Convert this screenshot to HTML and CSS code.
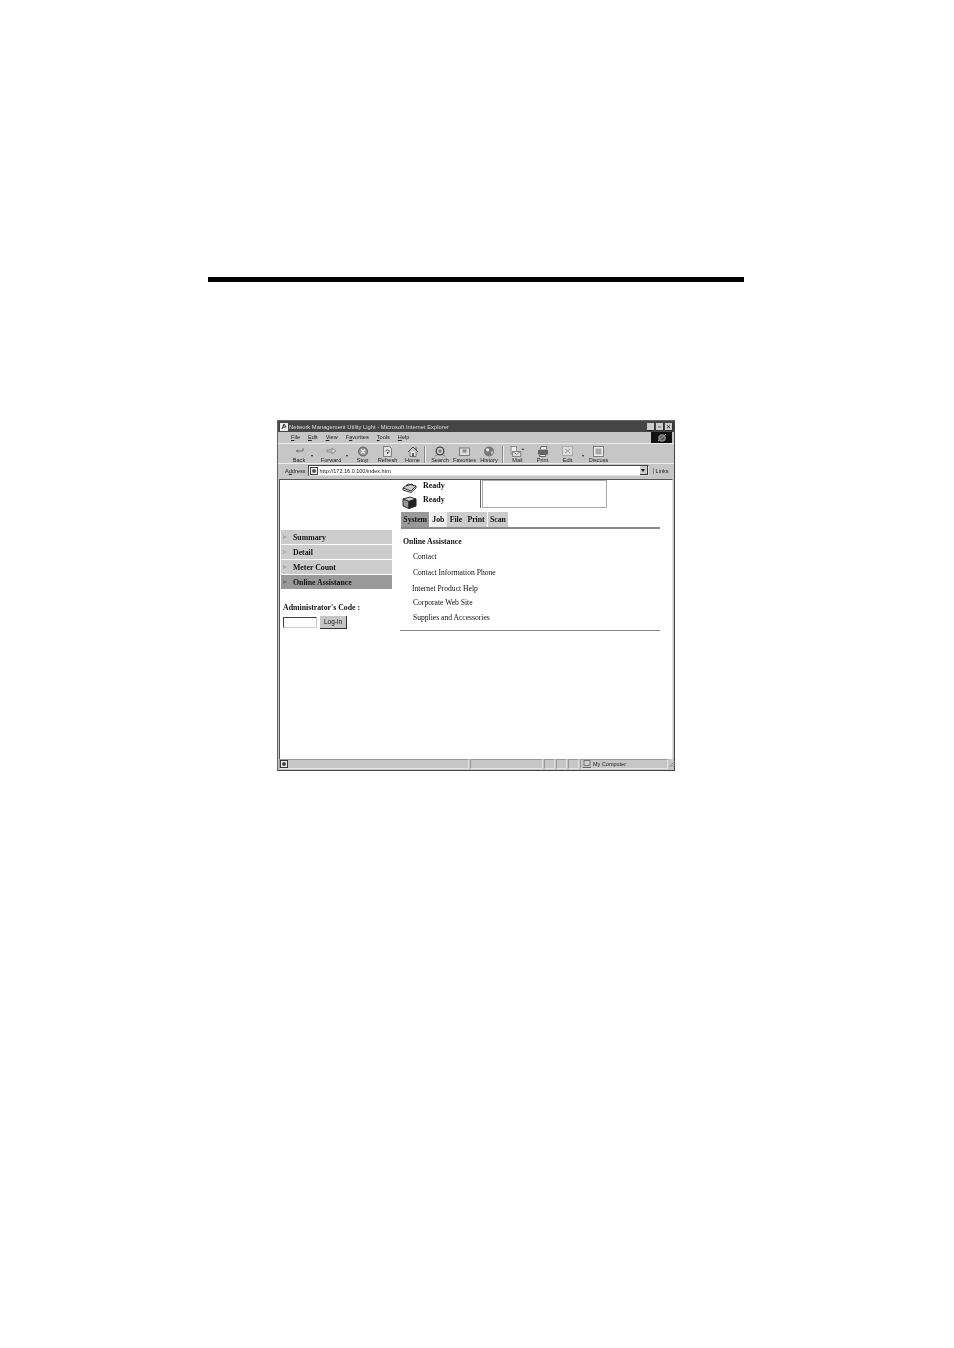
FILE: index.html
```html
<!DOCTYPE html>
<html lang="en">
<head>
  <meta charset="UTF-8" />
  <title>Network Management Utility Light</title>
  <link rel="stylesheet" href="styles.css">
</head>
<body>
  <div class="rule"></div>

  <div class="window">
    <div class="titlebar">
      <svg class="title-icon" width="8" height="8" viewBox="0 0 8 8"><rect width="8" height="8" fill="#eee"/><path d="M2 6 L4 1 L6 4 L3 4" fill="none" stroke="#333" stroke-width="1"/></svg>
      <span class="title-text">Network Management Utility Light - Microsoft Internet Explorer</span>
      <span class="winbtns">
        <span class="winbtn">_</span><span class="winbtn">▫</span><span class="winbtn">×</span>
      </span>
    </div>

    <div class="menubar">
      <div class="menus">
        <span><u>F</u>ile</span><span><u>E</u>dit</span><span><u>V</u>iew</span><span>F<u>a</u>vorites</span><span><u>T</u>ools</span><span><u>H</u>elp</span>
      </div>
      <div class="throbber">
        <svg width="10" height="10" viewBox="0 0 10 10"><circle cx="5" cy="5" r="3" fill="#555" stroke="#888" stroke-width="1.6"/><path d="M1 8 C3 6 7 3 9 1" stroke="#999" stroke-width="1" fill="none"/></svg>
      </div>
    </div>

    <div class="toolbar">
      <div class="tool tool-back">
        <svg width="9" height="10" viewBox="0 0 9 10"><path d="M8 2 V5 H1.5 M3 3.5 L1.5 5 L3 6.5" fill="none" stroke="#555" stroke-width=".8"/></svg>
        <span>Back</span>
      </div>
      <i class="drop"></i>
      <div class="tool tool-forward">
        <svg width="11" height="10" viewBox="0 0 11 10"><path d="M1 4 H6 V2 L10 5 L6 8 V6 H1 Z" fill="#ccc" stroke="#777" stroke-width=".7"/></svg>
        <span>Forward</span>
      </div>
      <i class="drop"></i>
      <div class="tool tool-stop">
        <svg width="10" height="11" viewBox="0 0 10 11"><circle cx="5" cy="5.5" r="4.5" fill="#999" stroke="#444" stroke-width=".8"/><path d="M3 3.5 L7 7.5 M7 3.5 L3 7.5" stroke="#eee" stroke-width="1.1"/></svg>
        <span>Stop</span>
      </div>
      <div class="tool tool-refresh">
        <svg width="9" height="11" viewBox="0 0 9 11"><path d="M.5 .5 H6.5 L8.5 2.5 V10.5 H.5 Z" fill="#e4e4e4" stroke="#666" stroke-width=".8"/><path d="M3 5.5 A1.6 1.6 0 1 1 4.5 7 M4.5 8 L4.5 6" fill="none" stroke="#444" stroke-width=".8"/></svg>
        <span>Refresh</span>
      </div>
      <div class="tool tool-home">
        <svg width="12" height="11" viewBox="0 0 12 11"><path d="M1 6 L6 1 L11 6 M9 1.5 V4" fill="none" stroke="#444" stroke-width="1"/><path d="M3 5.5 V10.5 H9 V5.5" fill="#eee" stroke="#555" stroke-width=".8"/><rect x="5" y="7" width="2" height="3.5" fill="#555"/></svg>
        <span>Home</span>
      </div>
      <b class="sep"></b>
      <div class="tool tool-search">
        <svg width="12" height="11" viewBox="0 0 12 11"><circle cx="6" cy="5" r="3.8" fill="#ccc" stroke="#444" stroke-width="1.3"/><circle cx="6" cy="5" r="1.5" fill="#777"/><path d="M3 8.5 L1 10.5 M9 8.5 L11 10.5" stroke="#444" stroke-width=".8"/></svg>
        <span>Search</span>
      </div>
      <div class="tool tool-favorites">
        <svg width="11" height="10" viewBox="0 0 11 10"><rect x=".5" y="2" width="10" height="7.5" fill="#ddd" stroke="#666" stroke-width=".8"/><rect x="3.5" y="3.5" width="4" height="3" fill="#888"/></svg>
        <span>Favorites</span>
      </div>
      <div class="tool tool-history">
        <svg width="12" height="11" viewBox="0 0 12 11"><circle cx="6" cy="5.5" r="5" fill="#777"/><path d="M3 3 C5 1 7 3 6 5 C4 6 3 5 3 3 M8 6 L10 5 L9 9 Z" fill="#eee"/></svg>
        <span>History</span>
      </div>
      <b class="sep"></b>
      <div class="tool tool-mail">
        <svg width="15" height="12" viewBox="0 0 15 12"><rect x=".5" y=".5" width="6" height="8" fill="#eee" stroke="#777" stroke-width=".8"/><path d="M2 11.5 H11 V6 H2 Z M2 6 L6.5 9 L11 6" fill="#ddd" stroke="#666" stroke-width=".8"/><path d="M12 3 H15 L13.5 4.5 Z" fill="#222"/></svg>
        <span>Mail</span>
      </div>
      <div class="tool tool-print">
        <svg width="12" height="11" viewBox="0 0 12 11"><path d="M4 .5 H10 L9 4 H3 Z" fill="#eee" stroke="#555" stroke-width=".8"/><rect x="1" y="4" width="10" height="4.5" fill="#666"/><path d="M3 8.5 H9 L8.5 10.5 H2.5 Z" fill="#eee" stroke="#444" stroke-width=".8"/></svg>
        <span>Print</span>
      </div>
      <div class="tool tool-edit">
        <svg width="11" height="10" viewBox="0 0 11 10"><rect x=".5" y=".5" width="10" height="9" fill="#ddd" stroke="#aaa"/><path d="M3 3 L8 7 M8 3 L3 7" stroke="#999"/></svg>
        <span>Edit</span>
      </div>
      <i class="drop"></i>
      <div class="tool tool-discuss">
        <svg width="11" height="11" viewBox="0 0 11 11"><rect x=".5" y=".5" width="10" height="10" fill="#eee" stroke="#666" stroke-width=".8"/><rect x="2.5" y="2.5" width="6" height="6" fill="#aaa"/></svg>
        <span>Discuss</span>
      </div>
    </div>

    <div class="addressbar">
      <span class="address-label">A<u>d</u>dress</span>
      <div class="address-field">
        <svg width="8" height="8" viewBox="0 0 8 8"><rect x=".5" y=".5" width="7" height="7" fill="#eee" stroke="#444"/><circle cx="4" cy="4" r="2" fill="#555"/></svg>
        <span>http://172.16.0.100/index.htm</span>
        <i class="combo"></i>
      </div>
      <span class="links">Links</span>
    </div>

    <div class="viewport">
      <div class="leftcol">
        <ul class="nav">
          <li><i></i>Summary</li>
          <li><i></i>Detail</li>
          <li><i></i>Meter Count</li>
          <li class="active"><i></i>Online Assistance</li>
        </ul>
        <div class="admin-label">Administrator's Code :</div>
        <div class="login">
          <div class="code-input"></div>
          <div class="login-btn">Log-in</div>
        </div>
      </div>

      <div class="rightcol">
        <div class="status-area">
          <div class="devices">
            <div class="device">
              <svg width="15" height="11" viewBox="0 0 15 11"><path d="M1 6 L6 2 L14 4 L9 9 Z" fill="#ccc" stroke="#333"/><path d="M4 4 L10 2 L12 4 M1 6 V8 L9 10.5 L14 6 V4" fill="none" stroke="#333"/></svg>
              <span>Ready</span>
            </div>
            <div class="device">
              <svg width="15" height="13" viewBox="0 0 15 13"><path d="M1 3 L8 1 L14 3 L7 5.5 Z" fill="#ccc" stroke="#333"/><path d="M1 3 V10 L7 12.5 V5.5 Z" fill="#999" stroke="#333"/><path d="M7 5.5 L14 3 V10 L7 12.5 Z" fill="#222" stroke="#222"/></svg>
              <span>Ready</span>
            </div>
          </div>
          <div class="divider"></div>
          <div class="message-box"></div>
        </div>

        <div class="tabs">
          <div class="tab tab-on">System</div>
          <div class="tab tab-light">Job</div>
          <div class="tab">File</div>
          <div class="tab">Print</div>
          <div class="tab">Scan</div>
        </div>

        <div class="panel">
          <h4>Online Assistance</h4>
          <a class="help-link">Contact</a>
          <a class="help-link wide">Contact Information Phone</a>
          <a class="help-link wide shifted">Internet Product Help</a>
          <a class="help-link narrow">Corporate Web Site</a>
          <a class="help-link">Supplies and Accessories</a>
        </div>
      </div>
    </div>

    <div class="statusbar">
      <div class="st st-main">
        <svg width="8" height="8" viewBox="0 0 8 8"><rect x=".5" y=".5" width="7" height="7" fill="#eee" stroke="#333"/><circle cx="4" cy="4" r="2" fill="#444"/></svg>
      </div>
      <div class="st st-progress"></div>
      <div class="st st-small"></div>
      <div class="st st-small"></div>
      <div class="st st-small"></div>
      <div class="st st-zone">
        <svg width="8" height="8" viewBox="0 0 8 8"><rect x="1" y=".5" width="6" height="5" fill="#ccc" stroke="#666" stroke-width=".8"/><path d="M0 7.5 H8" stroke="#666"/></svg>
        <span>My Computer</span>
      </div>
      <svg class="grip" width="6" height="8" viewBox="0 0 6 8"><path d="M0 8 L6 2 M2 8 L6 4 M4 8 L6 6" stroke="#888" stroke-width=".7"/></svg>
    </div>
  </div>
</body>
</html>
```

FILE: styles.css
```css
html, body {
  margin: 0;
  background: #fff;
}

body {
  height: 1348px;
  overflow: hidden;
  padding-top: 277px;
  box-sizing: border-box;
}

.rule {
  width: 536px;
  height: 5px;
  margin-left: 208px;
  background: #000;
}

.window {
  width: 398px;
  height: 351px;
  margin: 138px 0 0 277px;
  box-sizing: border-box;
  border: 1px solid #666;
  border-right-color: #444;
  border-bottom-color: #444;
  background: #c6c6c6;
  display: flex;
  flex-direction: column;
  font-family: "Liberation Sans", Arial, sans-serif;
  font-size: 5.6px;
  color: #222;
  filter: blur(0.35px);
}

.titlebar {
  height: 11px;
  background: #454545;
  color: #ddd;
  display: flex;
  align-items: center;
  padding: 0 1px 0 2px;
  gap: 1px;
  font-size: 5.8px;
}

.title-text {
  flex: 1;
}

.winbtns {
  display: flex;
  gap: 0;
}

.winbtn {
  width: 8px;
  height: 8px;
  background: #ccc;
  color: #111;
  border-right: 1px solid #333;
  border-bottom: 1px solid #333;
  box-sizing: border-box;
  font-size: 7px;
  line-height: 7px;
  text-align: center;
  margin-left: 1px;
}

.menubar {
  height: 12px;
  display: flex;
  align-items: center;
  justify-content: space-between;
  padding-left: 13px;
  border-bottom: 1px solid #eee;
  box-sizing: border-box;
}

.menus {
  display: flex;
  gap: 8px;
  margin-top: -2px;
}

.throbber {
  width: 21px;
  height: 11px;
  background: #111;
  margin-right: 2px;
  display: flex;
  align-items: center;
  justify-content: center;
}

.toolbar {
  height: 20px;
  display: flex;
  align-items: flex-start;
  padding: 2px 0 0 11px;
  box-sizing: border-box;
  border-bottom: 1px solid #eee;
}

.tool {
  height: 18px;
  display: flex;
  flex-direction: column;
  align-items: center;
  justify-content: space-between;
  flex: none;
  line-height: 7px;
  white-space: nowrap;
}

.tool-back { width: 20px; }
.tool-forward { width: 26px; margin-left: 3px; }
.tool-stop { width: 21px; margin-left: 2px; }
.tool-refresh { width: 29px; }
.tool-home { width: 21px; }
.tool-search { width: 24px; margin-left: 1px; }
.tool-favorites { width: 25px; }
.tool-history { width: 24px; }
.tool-mail { width: 25px; }
.tool-print { width: 25px; }
.tool-edit { width: 25px; }
.tool-discuss { width: 25px; }

.drop {
  width: 0;
  height: 0;
  margin: 9px 2px 0 2px;
  border-left: 1.5px solid transparent;
  border-right: 1.5px solid transparent;
  border-top: 2px solid #222;
  flex: none;
}

.sep {
  width: 1px;
  height: 17px;
  margin: 0 1px;
  background: #888;
  border-right: 1px solid #eee;
  flex: none;
}

.addressbar {
  height: 13px;
  display: flex;
  align-items: center;
  padding: 0 2px 0 7px;
  box-sizing: border-box;
  gap: 2px;
}

.address-field {
  width: 341px;
  height: 11px;
  box-sizing: border-box;
  background: #fff;
  border: 1px solid #444;
  border-right-color: #ddd;
  border-bottom-color: #ddd;
  display: flex;
  align-items: center;
  gap: 2px;
  padding-left: 1px;
  font-size: 5.5px;
}

.address-field span {
  flex: 1;
}

.combo {
  width: 8px;
  height: 9px;
  background: #ccc;
  border-right: 1px solid #333;
  border-bottom: 1px solid #333;
  box-sizing: border-box;
  position: relative;
}

.combo::after {
  content: "";
  position: absolute;
  left: 1px;
  top: 3px;
  border-left: 2.5px solid transparent;
  border-right: 2.5px solid transparent;
  border-top: 3px solid #111;
}

.links {
  margin-left: 2px;
  padding-left: 2px;
  border-left: 1px solid #888;
}

.viewport {
  flex: 1;
  margin: 2px 1px 0;
  background: #fff;
  border-top: 1px solid #555;
  border-left: 1px solid #555;
  border-right: 1px solid #ddd;
  display: flex;
  font-family: "Liberation Serif", "Times New Roman", serif;
  font-size: 7.8px;
  color: #111;
}

.leftcol {
  width: 111px;
  margin-left: 1px;
  padding-top: 50px;
  flex: none;
}

.nav {
  list-style: none;
  margin: 0;
  padding: 0;
}

.nav li {
  height: 14px;
  margin-bottom: 1px;
  background: #ccc;
  display: flex;
  align-items: center;
  font-weight: bold;
}

.nav li i {
  width: 0;
  height: 0;
  margin: 0 6px 0 2px;
  border-top: 2.5px solid transparent;
  border-bottom: 2.5px solid transparent;
  border-left: 4px solid #aaa;
}

.nav li.active {
  background: #999;
}

.nav li.active i {
  border-left-color: #777;
}

.admin-label {
  margin: 14px 0 0 2px;
  height: 10px;
  line-height: 10px;
  font-weight: bold;
}

.login {
  display: flex;
  align-items: center;
  margin: 3px 0 0 2px;
  gap: 3px;
}

.code-input {
  width: 34px;
  height: 11px;
  box-sizing: border-box;
  border: 1px solid #444;
  border-right-color: #ccc;
  border-bottom-color: #ccc;
}

.login-btn {
  width: 27px;
  height: 13px;
  box-sizing: border-box;
  background: #c6c6c6;
  border-right: 1px solid #333;
  border-bottom: 1px solid #333;
  font-family: "Liberation Sans", Arial, sans-serif;
  font-size: 6.5px;
  line-height: 12px;
  text-align: center;
}

.rightcol {
  width: 260px;
  margin-left: 8px;
  flex: none;
}

.status-area {
  display: flex;
  height: 32px;
}

.devices {
  width: 80px;
  padding: 1px 0 0 2px;
  box-sizing: border-box;
  flex: none;
}

.device {
  height: 14px;
  display: flex;
  align-items: flex-start;
  gap: 6px;
  font-weight: bold;
  font-size: 8px;
}

.device span {
  line-height: 10px;
}

.device svg {
  width: 15px;
  margin-top: 1px;
  flex: none;
}

.divider {
  width: 1px;
  height: 28px;
  margin-right: 1px;
  background: #666;
  flex: none;
}

.message-box {
  width: 125px;
  height: 28px;
  box-sizing: border-box;
  border: 1px solid #aaa;
}

.tabs {
  display: flex;
  gap: 0.6px;
  height: 15px;
  margin-left: 1px;
  padding-bottom: 2px;
  box-shadow: inset 0 -2px 0 #888;
}

.tab {
  height: 15px;
  padding: 0 2.3px;
  background: #ccc;
  font-weight: bold;
  line-height: 15px;
}

.tab-on {
  background: #999;
}

.tab-light {
  background: #eee;
}

.panel {
  margin-top: 8px;
  padding-bottom: 7px;
  border-bottom: 1px solid #888;
}

.panel h4 {
  margin: 0 0 0 3px;
  height: 10px;
  line-height: 10px;
  font-size: 7.8px;
}

.help-link {
  display: block;
  margin: 5px 0 0 13px;
  height: 10px;
  line-height: 10px;
  font-size: 7.6px;
}

.help-link.wide {
  margin-top: 6px;
}

.help-link.shifted {
  margin-left: 12px;
}

.help-link.narrow {
  margin-top: 4px;
}

.statusbar {
  height: 11px;
  display: flex;
  gap: 1px;
  padding-left: 1px;
  box-sizing: border-box;
}

.st {
  height: 10px;
  box-sizing: border-box;
  border-top: 1px solid #999;
  border-left: 1px solid #999;
  border-right: 1px solid #e4e4e4;
  border-bottom: 1px solid #e4e4e4;
  display: flex;
  align-items: center;
  gap: 2px;
  flex: none;
}

.st-main { width: 190px; }
.st-progress { width: 73px; }
.st-small { width: 11px; }
.st-zone { width: 88px; padding-left: 2px; font-size: 5.5px; }

.grip {
  flex: none;
  margin-left: auto;
  margin-right: 1px;
}
```
